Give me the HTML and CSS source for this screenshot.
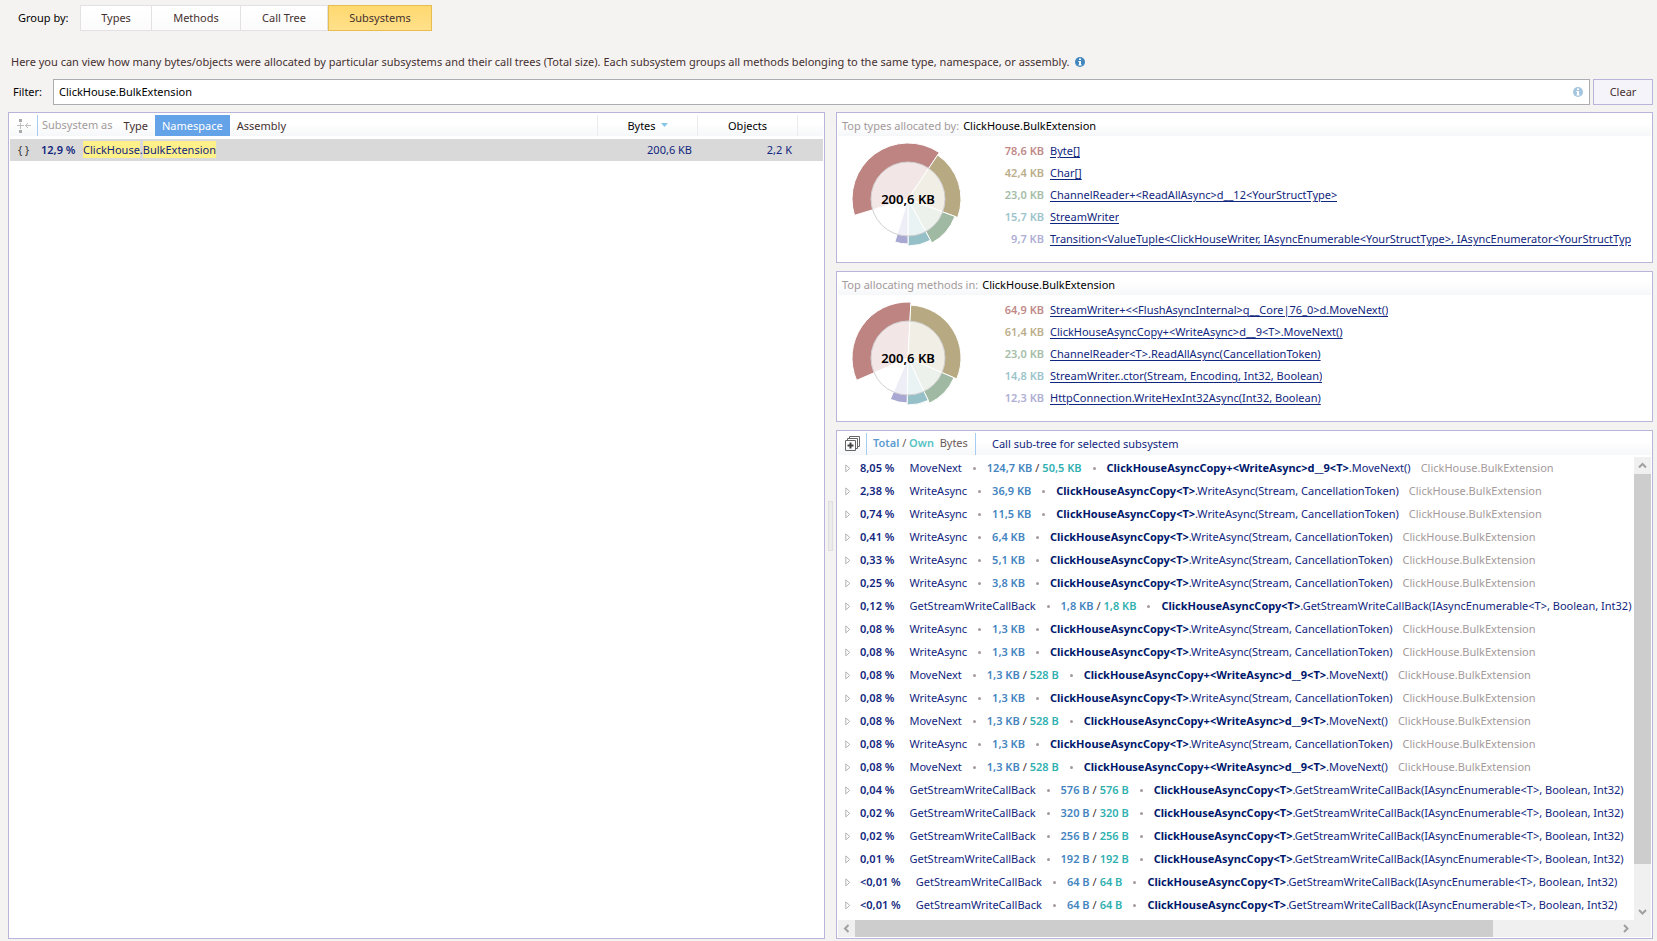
FILE: index.html
```
<!DOCTYPE html>
<html lang="en">
<head>
<meta charset="utf-8">
<title>Subsystems</title>
<link rel="stylesheet" href="styles.css">
</head>
<body>
<svg class="defs" aria-hidden="true">
  <symbol id="info" viewBox="0 0 10 10"><circle cx="5" cy="5" r="5" fill="currentColor"/><path d="M4 1.5h2v1.4H4zM3.4 4H6v3.6h.7v.9H3.4v-.9H4V4.9h-.6z" fill="#fff"/></symbol>
  <symbol id="tri" viewBox="0 0 6 9"><path d="M.8.9v7L4.8 4.4z" fill="#fff" stroke="#b4b4b4"/></symbol>
</svg>
<div class="app">
  <nav class="groups">
    <span class="groups-label">Group by:</span>
    <button class="tab w72">Types</button><button class="tab w89">Methods</button><button class="tab w87">Call Tree</button><button class="tab w104 active">Subsystems</button>
  </nav>
  <p class="hint">Here you can view how many bytes/objects were allocated by particular subsystems and their call trees (Total size). Each subsystem groups all methods belonging to the same type, namespace, or assembly.<svg class="info"><use href="#info"/></svg></p>
  <div class="filter">
    <label for="filter">Filter:</label>
    <div class="filter-box"><input id="filter" type="text" value="ClickHouse.BulkExtension"><svg class="info pale"><use href="#info"/></svg></div>
    <button class="clear">Clear</button>
  </div>
  <main class="main">
    <section class="panel left">
      <table class="subsystems">
        <colgroup><col><col class="c-num"><col class="c-num"><col class="c-end"></colgroup>
        <thead><tr>
          <th class="first"><div class="bar">
            <svg class="pivot" viewBox="0 0 14 14"><path d="M2 0h3v3H2zM2 11h3v3H2z" fill="#a9a9a9"/><path d="M3.500 4v6M0 6.500h7M8.500 6.500H14M11 4 8.500 6.500 11 9" fill="none" stroke="#bdbdbd"/></svg>
            <span class="as">Subsystem as</span><button class="kind">Type</button><button class="kind on">Namespace</button><button class="kind">Assembly</button>
          </div></th>
          <th>Bytes<svg class="sort" viewBox="0 0 7 4"><path d="M0 0h7L3.500 4z" fill="#86c5ea"/></svg></th>
          <th>Objects</th>
          <th></th>
        </tr></thead>
        <tbody><tr>
          <td class="name"><span class="braces">{ }</span><b class="pct">12,9 %</b><mark>ClickHouse</mark>.<mark>BulkExtension</mark></td>
          <td>200,6 KB</td>
          <td>2,2 K</td>
          <td></td>
        </tr></tbody>
      </table>
    </section>
    <div class="splitter"><span class="grip"></span></div>
    <div class="right">
      <section class="panel top">
        <h2 class="head">Top types allocated by: <span>ClickHouse.BulkExtension</span></h2>
        <div class="body">
          <svg class="pie" viewBox="-56 -56 112 112">
            <g class="ring" stroke="#fff" stroke-width="1">
              <path fill="#be8482" d="M0 0L-53.55 16.37A56 56 0 0 1 31.32 -46.43Z"/>
              <path fill="#b7a982" d="M0 0L29.64 -43.94A53 53 0 0 1 49.67 18.48Z"/>
              <path fill="#9fb9a2" d="M0 0L46.86 17.43A50 50 0 0 1 23.93 43.90Z"/>
              <path fill="#95c0c8" d="M0 0L22.49 41.27A47 47 0 0 1 0 47Z"/>
              <path fill="#a9a8d2" d="M0 0L0 45A45 45 0 0 1 -13.16 43.03Z"/>
            </g>
            <circle r="37" fill="#fff" fill-opacity=".8" stroke="#d2d0d2"/>
            <text class="pie-text" x="0" y="5">200,6 KB</text>
          </svg>
          <ul class="legend">
            <li><b class="k1">78,6 KB</b><a href="#">Byte[]</a></li>
            <li><b class="k2">42,4 KB</b><a href="#">Char[]</a></li>
            <li><b class="k3">23,0 KB</b><a href="#">ChannelReader+&lt;ReadAllAsync&gt;d__12&lt;YourStructType&gt;</a></li>
            <li><b class="k4">15,7 KB</b><a href="#">StreamWriter</a></li>
            <li><b class="k5">9,7 KB</b><a href="#">Transition&lt;ValueTuple&lt;ClickHouseWriter, IAsyncEnumerable&lt;YourStructType&gt;, IAsyncEnumerator&lt;YourStructTyp</a></li>
          </ul>
        </div>
      </section>
      <section class="panel top">
        <h2 class="head">Top allocating methods in: <span>ClickHouse.BulkExtension</span></h2>
        <div class="body">
          <svg class="pie" viewBox="-56 -56 112 112">
            <g class="ring" stroke="#fff" stroke-width="1">
              <path fill="#be8482" d="M0 0L-51.36 22.33A56 56 0 0 1 2.93 -55.92Z"/>
              <path fill="#b7a982" d="M0 0L2.77 -52.93A53 53 0 0 1 48.71 20.88Z"/>
              <path fill="#9fb9a2" d="M0 0L45.96 19.70A50 50 0 0 1 21.53 45.13Z"/>
              <path fill="#95c0c8" d="M0 0L20.23 42.42A47 47 0 0 1 -.9 46.99Z"/>
              <path fill="#a9a8d2" d="M0 0L-.86 44.99A45 45 0 0 1 -17.73 41.36Z"/>
            </g>
            <circle r="37" fill="#fff" fill-opacity=".8" stroke="#d2d0d2"/>
            <text class="pie-text" x="0" y="5">200,6 KB</text>
          </svg>
          <ul class="legend">
            <li><b class="k1">64,9 KB</b><a href="#">StreamWriter+&lt;&lt;FlushAsyncInternal&gt;g__Core|76_0&gt;d.MoveNext()</a></li>
            <li><b class="k2">61,4 KB</b><a href="#">ClickHouseAsyncCopy+&lt;WriteAsync&gt;d__9&lt;T&gt;.MoveNext()</a></li>
            <li><b class="k3">23,0 KB</b><a href="#">ChannelReader&lt;T&gt;.ReadAllAsync(CancellationToken)</a></li>
            <li><b class="k4">14,8 KB</b><a href="#">StreamWriter..ctor(Stream, Encoding, Int32, Boolean)</a></li>
            <li><b class="k5">12,3 KB</b><a href="#">HttpConnection.WriteHexInt32Async(Int32, Boolean)</a></li>
          </ul>
        </div>
      </section>
      <section class="panel tree">
        <div class="head tree-head">
          <svg class="expand" viewBox="0 0 15 15"><path d="M.5 4.500h10v10H.5zM2.500 4V2.500h10v10H11M4.500 2V.500h10v10H13" fill="none" stroke="#666"/><path d="M5.500 6.500v6M2.500 9.500h6" stroke="#444" stroke-width="2"/></svg>
          <span class="legend-bytes"><b class="t">Total</b> / <b class="o">Own</b>&nbsp; Bytes</span>
          <span class="title">Call sub-tree for selected subsystem</span>
        </div>
        <div class="scroll">
          <ul class="rows">
            <li><svg class="tri"><use href="#tri"/></svg><b class="p">8,05 %</b><span>MoveNext</span><i></i><b class="t">124,7 KB</b><s>/</s><b class="o">50,5 KB</b><i></i><span><strong>ClickHouseAsyncCopy+&lt;WriteAsync&gt;d__9&lt;T&gt;</strong>.MoveNext()</span><em>ClickHouse.BulkExtension</em></li>
            <li><svg class="tri"><use href="#tri"/></svg><b class="p">2,38 %</b><span>WriteAsync</span><i></i><b class="t">36,9 KB</b><i></i><span><strong>ClickHouseAsyncCopy&lt;T&gt;</strong>.WriteAsync(Stream, CancellationToken)</span><em>ClickHouse.BulkExtension</em></li>
            <li><svg class="tri"><use href="#tri"/></svg><b class="p">0,74 %</b><span>WriteAsync</span><i></i><b class="t">11,5 KB</b><i></i><span><strong>ClickHouseAsyncCopy&lt;T&gt;</strong>.WriteAsync(Stream, CancellationToken)</span><em>ClickHouse.BulkExtension</em></li>
            <li><svg class="tri"><use href="#tri"/></svg><b class="p">0,41 %</b><span>WriteAsync</span><i></i><b class="t">6,4 KB</b><i></i><span><strong>ClickHouseAsyncCopy&lt;T&gt;</strong>.WriteAsync(Stream, CancellationToken)</span><em>ClickHouse.BulkExtension</em></li>
            <li><svg class="tri"><use href="#tri"/></svg><b class="p">0,33 %</b><span>WriteAsync</span><i></i><b class="t">5,1 KB</b><i></i><span><strong>ClickHouseAsyncCopy&lt;T&gt;</strong>.WriteAsync(Stream, CancellationToken)</span><em>ClickHouse.BulkExtension</em></li>
            <li><svg class="tri"><use href="#tri"/></svg><b class="p">0,25 %</b><span>WriteAsync</span><i></i><b class="t">3,8 KB</b><i></i><span><strong>ClickHouseAsyncCopy&lt;T&gt;</strong>.WriteAsync(Stream, CancellationToken)</span><em>ClickHouse.BulkExtension</em></li>
            <li><svg class="tri"><use href="#tri"/></svg><b class="p">0,12 %</b><span>GetStreamWriteCallBack</span><i></i><b class="t">1,8 KB</b><s>/</s><b class="o">1,8 KB</b><i></i><span><strong>ClickHouseAsyncCopy&lt;T&gt;</strong>.GetStreamWriteCallBack(IAsyncEnumerable&lt;T&gt;, Boolean, Int32)</span></li>
            <li><svg class="tri"><use href="#tri"/></svg><b class="p">0,08 %</b><span>WriteAsync</span><i></i><b class="t">1,3 KB</b><i></i><span><strong>ClickHouseAsyncCopy&lt;T&gt;</strong>.WriteAsync(Stream, CancellationToken)</span><em>ClickHouse.BulkExtension</em></li>
            <li><svg class="tri"><use href="#tri"/></svg><b class="p">0,08 %</b><span>WriteAsync</span><i></i><b class="t">1,3 KB</b><i></i><span><strong>ClickHouseAsyncCopy&lt;T&gt;</strong>.WriteAsync(Stream, CancellationToken)</span><em>ClickHouse.BulkExtension</em></li>
            <li><svg class="tri"><use href="#tri"/></svg><b class="p">0,08 %</b><span>MoveNext</span><i></i><b class="t">1,3 KB</b><s>/</s><b class="o">528 B</b><i></i><span><strong>ClickHouseAsyncCopy+&lt;WriteAsync&gt;d__9&lt;T&gt;</strong>.MoveNext()</span><em>ClickHouse.BulkExtension</em></li>
            <li><svg class="tri"><use href="#tri"/></svg><b class="p">0,08 %</b><span>WriteAsync</span><i></i><b class="t">1,3 KB</b><i></i><span><strong>ClickHouseAsyncCopy&lt;T&gt;</strong>.WriteAsync(Stream, CancellationToken)</span><em>ClickHouse.BulkExtension</em></li>
            <li><svg class="tri"><use href="#tri"/></svg><b class="p">0,08 %</b><span>MoveNext</span><i></i><b class="t">1,3 KB</b><s>/</s><b class="o">528 B</b><i></i><span><strong>ClickHouseAsyncCopy+&lt;WriteAsync&gt;d__9&lt;T&gt;</strong>.MoveNext()</span><em>ClickHouse.BulkExtension</em></li>
            <li><svg class="tri"><use href="#tri"/></svg><b class="p">0,08 %</b><span>WriteAsync</span><i></i><b class="t">1,3 KB</b><i></i><span><strong>ClickHouseAsyncCopy&lt;T&gt;</strong>.WriteAsync(Stream, CancellationToken)</span><em>ClickHouse.BulkExtension</em></li>
            <li><svg class="tri"><use href="#tri"/></svg><b class="p">0,08 %</b><span>MoveNext</span><i></i><b class="t">1,3 KB</b><s>/</s><b class="o">528 B</b><i></i><span><strong>ClickHouseAsyncCopy+&lt;WriteAsync&gt;d__9&lt;T&gt;</strong>.MoveNext()</span><em>ClickHouse.BulkExtension</em></li>
            <li><svg class="tri"><use href="#tri"/></svg><b class="p">0,04 %</b><span>GetStreamWriteCallBack</span><i></i><b class="t">576 B</b><s>/</s><b class="o">576 B</b><i></i><span><strong>ClickHouseAsyncCopy&lt;T&gt;</strong>.GetStreamWriteCallBack(IAsyncEnumerable&lt;T&gt;, Boolean, Int32)</span></li>
            <li><svg class="tri"><use href="#tri"/></svg><b class="p">0,02 %</b><span>GetStreamWriteCallBack</span><i></i><b class="t">320 B</b><s>/</s><b class="o">320 B</b><i></i><span><strong>ClickHouseAsyncCopy&lt;T&gt;</strong>.GetStreamWriteCallBack(IAsyncEnumerable&lt;T&gt;, Boolean, Int32)</span></li>
            <li><svg class="tri"><use href="#tri"/></svg><b class="p">0,02 %</b><span>GetStreamWriteCallBack</span><i></i><b class="t">256 B</b><s>/</s><b class="o">256 B</b><i></i><span><strong>ClickHouseAsyncCopy&lt;T&gt;</strong>.GetStreamWriteCallBack(IAsyncEnumerable&lt;T&gt;, Boolean, Int32)</span></li>
            <li><svg class="tri"><use href="#tri"/></svg><b class="p">0,01 %</b><span>GetStreamWriteCallBack</span><i></i><b class="t">192 B</b><s>/</s><b class="o">192 B</b><i></i><span><strong>ClickHouseAsyncCopy&lt;T&gt;</strong>.GetStreamWriteCallBack(IAsyncEnumerable&lt;T&gt;, Boolean, Int32)</span></li>
            <li><svg class="tri"><use href="#tri"/></svg><b class="p">&lt;0,01 %</b><span>GetStreamWriteCallBack</span><i></i><b class="t">64 B</b><s>/</s><b class="o">64 B</b><i></i><span><strong>ClickHouseAsyncCopy&lt;T&gt;</strong>.GetStreamWriteCallBack(IAsyncEnumerable&lt;T&gt;, Boolean, Int32)</span></li>
            <li><svg class="tri"><use href="#tri"/></svg><b class="p">&lt;0,01 %</b><span>GetStreamWriteCallBack</span><i></i><b class="t">64 B</b><s>/</s><b class="o">64 B</b><i></i><span><strong>ClickHouseAsyncCopy&lt;T&gt;</strong>.GetStreamWriteCallBack(IAsyncEnumerable&lt;T&gt;, Boolean, Int32)</span></li>
          </ul>
          <div class="vbar">
            <svg class="arrow" viewBox="0 0 17 17"><path d="M5 10.500 8.500 7l3.500 3.500"/></svg>
            <span class="vthumb"></span><span class="vrest"></span>
            <svg class="arrow" viewBox="0 0 17 17"><path d="M5 7l3.500 3.500L12 7"/></svg>
          </div>
          <div class="hbar">
            <svg class="arrow" viewBox="0 0 17 17"><path d="M10.500 5 7 8.500l3.500 3.500"/></svg>
            <span class="hthumb"></span><span class="hrest"></span>
            <svg class="arrow" viewBox="0 0 17 17"><path d="M7 5l3.500 3.500L7 12"/></svg>
          </div>
          <div class="corner"></div>
        </div>
      </section>
    </div>
  </main>
</div>
</body>
</html>
```
FILE: styles.css
```
* { box-sizing: border-box; }
html, body { height: 100%; }
body {
  margin: 0;
  background: #f5f3f2;
  color: #000;
  font: 11px/16px "Noto Sans", "Open Sans", sans-serif;
  overflow: hidden;
}
button, input { font: inherit; color: inherit; margin: 0; }
ul { list-style: none; margin: 0; padding: 0; }
b, strong { font-weight: 600; }
.defs { position: absolute; width: 0; height: 0; }
.app { display: flex; flex-direction: column; height: 100vh; padding: 5px 4px 2px 8px; }

.groups { display: flex; align-items: center; height: 26px; }
.groups-label { width: 72px; padding-left: 10px; }
.tab {
  height: 26px; padding: 0; color: #45302f;
  border: 1px solid #e3e1e2; border-left-width: 0;
  background: linear-gradient(#fff, #fbfbfb);
}
.groups-label + .tab { border-left-width: 1px; }
.w72 { width: 72px; }
.w89 { width: 89px; }
.w87 { width: 87px; }
.w104 { width: 104px; }
.tab.active { border: 1px solid #e8bd4e; background: linear-gradient(#ffd970, #ffe08a); }

.hint { display: flex; align-items: center; gap: 5px; margin: 23px 0 0 3px; color: #45302f; white-space: nowrap; }
.info { width: 10px; height: 10px; color: #4186bd; flex: none; }
.info.pale { color: #a6c6df; }

.filter { display: flex; align-items: center; margin-top: 9px; height: 26px; }
.filter label { width: 45px; padding-left: 5px; flex: none; }
.filter-box {
  flex: 1; display: flex; align-items: center; height: 26px; padding: 0 6px 0 5px;
  border: 1px solid #abadb3; background: #fff;
}
.filter-box input { flex: 1; min-width: 0; height: 20px; border: 0; padding: 0 0 2px; outline: 0; background: none; }
.clear { width: 60px; height: 26px; margin-left: 3px; padding: 0; color: #45302f; border: 1px solid #b9b4da; background: #f5f4fa; }

.main { flex: 1; min-height: 0; display: flex; margin-top: 7px; }
.panel { background: #fff; border: 1px solid #b9b4da; }
.left { flex: 1; min-width: 0; padding: 2px 1px; }
.splitter { width: 11px; display: flex; align-items: center; justify-content: center; }
.grip { width: 5px; height: 50px; background: #ebebeb; border: 1px solid #dedede; }
.right { width: 817px; display: flex; flex-direction: column; gap: 8px; }

.subsystems { width: 100%; border-collapse: separate; border-spacing: 0; table-layout: fixed; }
.c-num { width: 100px; }
.c-end { width: 26px; }
.subsystems th {
  height: 21px; padding: 0; font-weight: 400; text-align: center; line-height: 20px;
  background: linear-gradient(#fff 40%, #f6f7f9);
}
.subsystems th + th { border-left: 1px solid #ececee; }
.bar { display: flex; align-items: center; height: 21px; }
.pivot { width: 14px; height: 14px; margin: 0 6px 0 7px; }
.as { height: 21px; padding: 0 4px; border-left: 1px solid #a6cdf0; color: #a39a9b; }
.kind { height: 21px; padding: 0 7px; border: 0; background: none; color: #45302f; }
.kind.on { background: #65a3e8; color: #fff; }
.sort { width: 7px; height: 4px; margin: 0 0 3px 5px; }
.subsystems tbody td {
  padding: 0 5px 0 0; text-align: right; color: #11267e;
  border-top: 3px solid #fff; background: #d9d9d9 padding-box; line-height: 22px;
}
.subsystems td.name { text-align: left; padding-left: 8px; }
.braces { display: inline-block; width: 23px; color: #333; }
.pct { display: inline-block; width: 42px; }
mark { background: #fff08a; color: inherit; padding: 1px 0; }

.head {
  display: flex; align-items: center; gap: 4px; height: 21px; line-height: 20px; margin: 2px 1px 0; padding-left: 4px;
  font-size: inherit; font-weight: 400; color: #a39a9b; background: linear-gradient(#fff 40%, #f6f7f9); flex: none;
}
.head span { color: #000; }
.top { height: 151px; flex: none; }
.body { display: flex; margin: 7px 5px 0 15px; }
.pie { width: 112px; height: 112px; flex: none; }
.pie-text { font-size: 13px; font-weight: 600; text-anchor: middle; fill: #000; }
.legend { flex: 1; min-width: 0; margin-left: 30px; }
.legend li { display: flex; gap: 6px; height: 22px; line-height: 16px; }
.legend b { width: 50px; text-align: right; flex: none; white-space: nowrap; }
.legend a { min-width: 0; overflow: hidden; white-space: nowrap; color: #11267e; text-underline-offset: 2px; }
.k1 { color: #c18a88; }
.k2 { color: #bbae8a; }
.k3 { color: #a5bda8; }
.k4 { color: #9cc4cb; }
.k5 { color: #afaed5; }

.tree { flex: 1; min-height: 0; display: flex; flex-direction: column; padding: 0 1px 1px; }
.tree-head { gap: 0; margin: 1px 0 0; height: 23px; padding-left: 7px; }
.expand { width: 15px; height: 15px; margin-right: 6px; }
.head .legend-bytes {
  height: 22px; width: 110px; padding-left: 6px;
  border: solid #a6cdf0; border-width: 0 1px; color: #6b5a58; white-space: nowrap;
}
.head .title { padding-left: 16px; color: #11267e; }
.t { color: #4484bf; }
.o { color: #2fb0b0; }
.head .t { color: #5c9bd1; }
.head .o { color: #58c2c3; }
.scroll { flex: 1; min-height: 0; display: grid; grid-template: 1fr 17px / 1fr 17px; margin-top: 2px; }
.rows { min-width: 0; overflow: hidden; color: #11267e; }
.rows li { display: flex; align-items: center; height: 23px; padding-bottom: 1px; white-space: nowrap; }
.tri { width: 6px; height: 9px; margin: 0 9px 0 7px; flex: none; }
.p { margin-right: 15px; }
.rows i { width: 3px; height: 3px; margin: 1px 11px 0; border-radius: 50%; background: #a39a9b; flex: none; }
.rows s { text-decoration: none; color: #45302f; margin: 0 3px; }
.rows em { font-style: normal; color: #a39a9b; margin-left: 10px; }
.rows strong { font-weight: 700; color: #00186b; }
.vbar { display: flex; flex-direction: column; background: #f0f0f0; }
.hbar { display: flex; background: #f0f0f0; }
.arrow { width: 17px; height: 17px; flex: none; fill: none; stroke: #a0a0a0; stroke-width: 2; }
.vthumb { flex: 391; background: #cdcdcd; }
.vrest { flex: 39; }
.hthumb { flex: 638; background: #cdcdcd; }
.hrest { flex: 124; }
.corner { background: #f0f0f0; }
```
